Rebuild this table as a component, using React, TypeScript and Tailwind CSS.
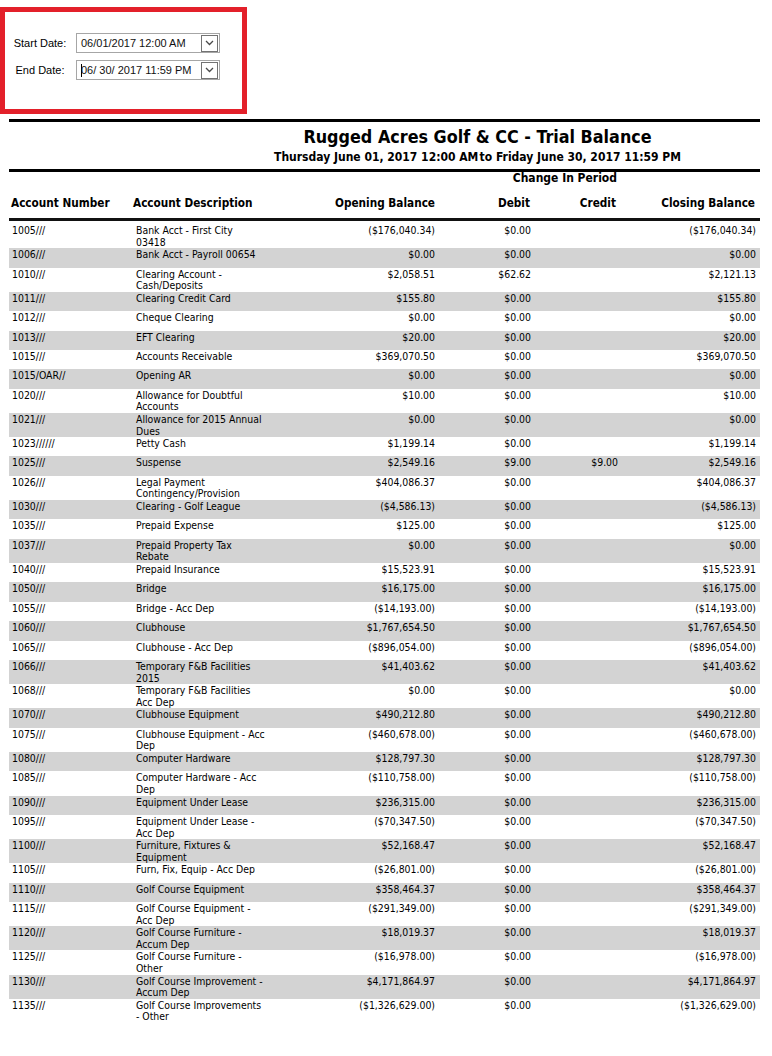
import React from "react";

type Row = [string, string[], string, string, string, string];

const rows: Row[] = [
  ["1005///", ["Bank Acct - First City", "03418"], "($176,040.34)", "$0.00", "", "($176,040.34)"],
  ["1006///", ["Bank Acct - Payroll 00654"], "$0.00", "$0.00", "", "$0.00"],
  ["1010///", ["Clearing Account -", "Cash/Deposits"], "$2,058.51", "$62.62", "", "$2,121.13"],
  ["1011///", ["Clearing Credit Card"], "$155.80", "$0.00", "", "$155.80"],
  ["1012///", ["Cheque Clearing"], "$0.00", "$0.00", "", "$0.00"],
  ["1013///", ["EFT Clearing"], "$20.00", "$0.00", "", "$20.00"],
  ["1015///", ["Accounts Receivable"], "$369,070.50", "$0.00", "", "$369,070.50"],
  ["1015/OAR//", ["Opening AR"], "$0.00", "$0.00", "", "$0.00"],
  ["1020///", ["Allowance for Doubtful", "Accounts"], "$10.00", "$0.00", "", "$10.00"],
  ["1021///", ["Allowance for 2015 Annual", "Dues"], "$0.00", "$0.00", "", "$0.00"],
  ["1023//////", ["Petty Cash"], "$1,199.14", "$0.00", "", "$1,199.14"],
  ["1025///", ["Suspense"], "$2,549.16", "$9.00", "$9.00", "$2,549.16"],
  ["1026///", ["Legal Payment", "Contingency/Provision"], "$404,086.37", "$0.00", "", "$404,086.37"],
  ["1030///", ["Clearing - Golf League"], "($4,586.13)", "$0.00", "", "($4,586.13)"],
  ["1035///", ["Prepaid Expense"], "$125.00", "$0.00", "", "$125.00"],
  ["1037///", ["Prepaid Property Tax", "Rebate"], "$0.00", "$0.00", "", "$0.00"],
  ["1040///", ["Prepaid Insurance"], "$15,523.91", "$0.00", "", "$15,523.91"],
  ["1050///", ["Bridge"], "$16,175.00", "$0.00", "", "$16,175.00"],
  ["1055///", ["Bridge - Acc Dep"], "($14,193.00)", "$0.00", "", "($14,193.00)"],
  ["1060///", ["Clubhouse"], "$1,767,654.50", "$0.00", "", "$1,767,654.50"],
  ["1065///", ["Clubhouse - Acc Dep"], "($896,054.00)", "$0.00", "", "($896,054.00)"],
  ["1066///", ["Temporary F&B Facilities", "2015"], "$41,403.62", "$0.00", "", "$41,403.62"],
  ["1068///", ["Temporary F&B Facilities", "Acc Dep"], "$0.00", "$0.00", "", "$0.00"],
  ["1070///", ["Clubhouse Equipment"], "$490,212.80", "$0.00", "", "$490,212.80"],
  ["1075///", ["Clubhouse Equipment - Acc", "Dep"], "($460,678.00)", "$0.00", "", "($460,678.00)"],
  ["1080///", ["Computer Hardware"], "$128,797.30", "$0.00", "", "$128,797.30"],
  ["1085///", ["Computer Hardware - Acc", "Dep"], "($110,758.00)", "$0.00", "", "($110,758.00)"],
  ["1090///", ["Equipment Under Lease"], "$236,315.00", "$0.00", "", "$236,315.00"],
  ["1095///", ["Equipment Under Lease -", "Acc Dep"], "($70,347.50)", "$0.00", "", "($70,347.50)"],
  ["1100///", ["Furniture, Fixtures &", "Equipment"], "$52,168.47", "$0.00", "", "$52,168.47"],
  ["1105///", ["Furn, Fix, Equip - Acc Dep"], "($26,801.00)", "$0.00", "", "($26,801.00)"],
  ["1110///", ["Golf Course Equipment"], "$358,464.37", "$0.00", "", "$358,464.37"],
  ["1115///", ["Golf Course Equipment -", "Acc Dep"], "($291,349.00)", "$0.00", "", "($291,349.00)"],
  ["1120///", ["Golf Course Furniture -", "Accum Dep"], "$18,019.37", "$0.00", "", "$18,019.37"],
  ["1125///", ["Golf Course Furniture -", "Other"], "($16,978.00)", "$0.00", "", "($16,978.00)"],
  ["1130///", ["Golf Course Improvement -", "Accum Dep"], "$4,171,864.97", "$0.00", "", "$4,171,864.97"],
  ["1135///", ["Golf Course Improvements", "- Other"], "($1,326,629.00)", "$0.00", "", "($1,326,629.00)"],
];

function Chevron() {
  return (
    <svg width="9" height="6" viewBox="0 0 9 6" fill="none">
      <polyline points="1,1 4.5,4.5 8,1" stroke="#4a4a4a" strokeWidth="1.3" />
    </svg>
  );
}

function DateBox({ value, caret }: { value: string; caret?: boolean }) {
  return (
    <div className="ml-[1px] flex h-[20px] w-[144px] items-center border border-[#a6a6a6] bg-white pl-[4px]">
      {caret && <span className="mr-[-1px] h-[13px] w-[1px] bg-black" />}
      <span className="whitespace-pre text-[#111]">{value}</span>
      <div className="ml-auto mr-[1px] flex h-[17px] w-[17px] items-center justify-center border border-[#737373] bg-white">
        <Chevron />
      </div>
    </div>
  );
}

const grid = "grid grid-cols-[124px_142px_162px_96px_87px_140px]";

export default function App() {
  return (
    <div className="min-h-[1056px] w-[772px] bg-white pt-[7px] text-black">
      <div className="h-[107px] w-[247px] border-[5px] border-[#e3202a] pt-[21px] font-['Liberation_Sans',Arial,sans-serif] text-[11px]">
        <div className="flex items-center">
          <span className="w-[70px] text-center">Start Date:</span>
          <DateBox value="06/01/2017 12:00 AM" />
        </div>
        <div className="mt-[7px] flex items-center">
          <span className="w-[70px] text-center">End Date:</span>
          <DateBox value="06/ 30/ 2017 11:59 PM" caret />
        </div>
      </div>

      <div className="ml-[9px] mt-[5px] w-[751px] font-['DejaVu_Sans_Condensed','DejaVu_Sans',sans-serif] font-stretch-condensed">
        <div className="h-[3px] bg-black" />
        <div className="mt-[6px] pl-[186px] text-center text-[17.8px] font-bold leading-[18px]">
          Rugged Acres Golf &amp; CC - Trial Balance
        </div>
        <div className="mt-[5px] pl-[186px] text-center text-[12px] font-bold leading-[13px]">
          Thursday June 01, 2017 12:00 AM<span className="tracking-[-2.5px]"> </span>to Friday June 30, 2017 11:59 PM
        </div>
        <div className="mt-[5px] h-[3px] bg-black" />
        <div className={`${grid} text-[12px] font-bold leading-[11px]`}>
          <div className="col-start-4 col-span-2 pr-[3px] pt-[1px] text-right">Change In Period</div>
        </div>
        <div className={`${grid} mt-[13px] text-[11.7px] font-bold leading-[13px]`}>
          <div className="pl-[2px]">Account Number</div>
          <div>Account Description</div>
          <div className="pr-[2px] text-right">Opening Balance</div>
          <div className="pr-[3px] text-right">Debit</div>
          <div className="pr-[4px] text-right">Credit</div>
          <div className="pr-[5px] text-right">Closing Balance</div>
        </div>
        <div className="mt-[8px] h-[3px] bg-[#111]" />
        <div className="mt-[3px] text-[10.4px] leading-[11.6px]">
          {rows.map((r, i) => (
            <div
              key={r[0] + i}
              className={`${grid} min-h-[19.4px] pt-[1px] ${i % 2 === 1 ? "bg-[#d3d3d3]" : ""}`}
            >
              <div className="pl-[3px]">{r[0]}</div>
              <div className="pl-[3px]">
                {r[1].map((l, j) => (
                  <div key={j} className="whitespace-nowrap">
                    {l}
                  </div>
                ))}
              </div>
              <div className="pr-[2px] text-right">{r[2]}</div>
              <div className="pr-[2px] text-right">{r[3]}</div>
              <div className="pr-[2px] text-right">{r[4]}</div>
              <div className="pr-[4px] text-right">{r[5]}</div>
            </div>
          ))}
        </div>
      </div>
    </div>
  );
}
